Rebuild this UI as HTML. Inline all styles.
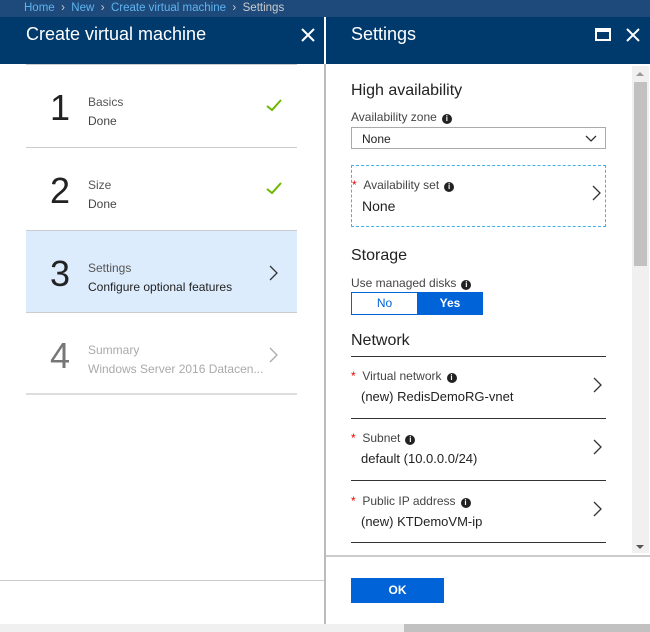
<!DOCTYPE html>
<html><head><style>
*{box-sizing:border-box;margin:0;padding:0}
body{width:650px;height:632px;position:relative;overflow:hidden;background:#fff;font-family:"Liberation Sans",sans-serif;color:#222}
.abs{position:absolute}
.crumb{left:0;top:0;width:650px;height:17px;background:#1d4a7a;font-size:11.5px;color:#5fb3f0;padding:2px 0 0 24px}
.crumb span{color:#ccc}
.hd{top:17px;height:47px;background:#003a6c;color:#fff;font-size:18px}
.item{left:26px;width:271px;height:82px;border-top:1px solid #ccc}
.num{position:absolute;left:24px;top:23px;font-size:36px;line-height:40px}
.t1{position:absolute;left:62px;top:30px;font-size:12px;color:#555}
.t2{position:absolute;left:62px;top:49px;font-size:12px}
.lbl{font-size:12px;color:#444}
.info{display:inline-block;width:10px;height:10px;border-radius:50%;background:#222;color:#fff;font-size:8px;line-height:10px;text-align:center;font-weight:bold;vertical-align:0px;margin-left:5px}
.star{color:#e00;font-size:12px}
.row{left:351px;width:255px;height:62px;border-top:1.5px solid #333}
.chev{position:absolute;right:4px;top:20px}
</style></head><body>
<div class="abs crumb">Home <span>&nbsp;›&nbsp;</span> New <span>&nbsp;›&nbsp;</span> Create virtual machine <span>&nbsp;›&nbsp;</span> <span>Settings</span></div>
<div class="abs hd" style="left:0;width:324px"><div class="abs" style="left:26px;top:7px">Create virtual machine</div>
<svg class="abs" style="left:301px;top:11px" width="14" height="14"><path d="M1 1L13 13M13 1L1 13" stroke="#fff" stroke-width="2"/></svg></div>
<div class="abs hd" style="left:326px;width:324px"><div class="abs" style="left:25px;top:7px">Settings</div>
<svg class="abs" style="left:269px;top:11px" width="16" height="13"><rect x="1" y="1" width="14" height="11" fill="none" stroke="#fff" stroke-width="2"/><rect x="1" y="1" width="14" height="3" fill="#fff"/></svg>
<svg class="abs" style="left:300px;top:11px" width="14" height="14"><path d="M1 1L13 13M13 1L1 13" stroke="#fff" stroke-width="2"/></svg></div>
<div class="abs" style="left:324px;top:64px;width:2px;height:560px;background:#bbb"></div>

<div class="abs item" style="top:64px"><div class="num">1</div><div class="t1">Basics</div><div class="t2" style="color:#444">Done</div>
<svg class="abs" style="left:240px;top:34px" width="16" height="13"><path d="M1 7L6 11L15 1" stroke="#6bb700" stroke-width="2" fill="none"/></svg></div>
<div class="abs item" style="top:147px"><div class="num">2</div><div class="t1">Size</div><div class="t2" style="color:#444">Done</div>
<svg class="abs" style="left:240px;top:34px" width="16" height="13"><path d="M1 7L6 11L15 1" stroke="#6bb700" stroke-width="2" fill="none"/></svg></div>
<div class="abs item" style="top:230px;background:#dcecfc"><div class="num">3</div><div class="t1">Settings</div><div class="t2">Configure optional features</div>
<svg class="abs" style="left:243px;top:34px" width="9" height="16"><path d="M1 1L8 8L1 15" stroke="#333" stroke-width="1.3" fill="none"/></svg></div>
<div class="abs item" style="top:312px;height:83px;border-bottom:2px solid #ddd;color:#888"><div class="num" style="color:#777">4</div><div class="t1" style="color:#aaa">Summary</div><div class="t2" style="color:#aaa">Windows Server 2016 Datacen...</div>
<svg class="abs" style="left:243px;top:34px" width="9" height="16"><path d="M1 1L8 8L1 15" stroke="#aaa" stroke-width="1.3" fill="none"/></svg></div>
<div class="abs" style="left:0;top:580px;width:324px;height:1px;background:#ccc"></div>

<div class="abs" style="left:351px;top:82px;font-size:16px">High availability</div>
<div class="abs lbl" style="left:351px;top:110px">Availability zone<span class="info">i</span></div>
<div class="abs" style="left:351px;top:127px;width:255px;height:22px;border:1px solid #aaa;font-size:12px;padding:4px 10px">None
<svg class="abs" style="right:8px;top:7px" width="12" height="8"><path d="M1 1L6 6L11 1" stroke="#333" stroke-width="1.3" fill="none"/></svg></div>
<div class="abs" style="left:351px;top:165px;width:255px;height:62px;border:1px dashed #3bb4e6">
<div class="abs lbl" style="left:0;top:12px"><span class="star">*</span> &nbsp;Availability set<span class="info">i</span></div>
<div class="abs" style="left:10px;top:32px;font-size:14px">None</div>
<svg class="abs chev" style="top:19px" width="9" height="16"><path d="M1 1L8 8L1 15" stroke="#333" stroke-width="1.3" fill="none"/></svg></div>
<div class="abs" style="left:351px;top:247px;font-size:16px">Storage</div>
<div class="abs lbl" style="left:351px;top:276px">Use managed disks<span class="info">i</span></div>
<div class="abs" style="left:351px;top:292px;width:132px;height:23px;border:1px solid #0063d8;font-size:12px">
<div class="abs" style="left:0;top:0;width:65px;height:21px;color:#0063d8;text-align:center;line-height:21px">No</div>
<div class="abs" style="left:65px;top:0;width:66px;height:21px;background:#0063d8;color:#fff;font-weight:bold;text-align:center;line-height:21px">Yes</div></div>
<div class="abs" style="left:351px;top:332px;font-size:16px">Network</div>
<div class="abs row" style="top:356px"><div class="abs lbl" style="top:12px"><span class="star">*</span> &nbsp;Virtual network<span class="info">i</span></div><div class="abs" style="left:10px;top:32px;font-size:13px">(new) RedisDemoRG-vnet</div>
<svg class="abs chev" width="9" height="16"><path d="M1 1L8 8L1 15" stroke="#333" stroke-width="1.3" fill="none"/></svg></div>
<div class="abs row" style="top:418px"><div class="abs lbl" style="top:12px"><span class="star">*</span> &nbsp;Subnet<span class="info">i</span></div><div class="abs" style="left:10px;top:32px;font-size:13px">default (10.0.0.0/24)</div>
<svg class="abs chev" width="9" height="16"><path d="M1 1L8 8L1 15" stroke="#333" stroke-width="1.3" fill="none"/></svg></div>
<div class="abs row" style="top:480px;height:63px;border-bottom:1.5px solid #333"><div class="abs lbl" style="top:13px"><span class="star">*</span> &nbsp;Public IP address<span class="info">i</span></div><div class="abs" style="left:10px;top:33px;font-size:13px">(new) KTDemoVM-ip</div>
<svg class="abs chev" width="9" height="16"><path d="M1 1L8 8L1 15" stroke="#333" stroke-width="1.3" fill="none"/></svg></div>

<div class="abs" style="left:632px;top:66px;width:17px;height:487px;background:#f0f0f0"></div>
<div class="abs" style="left:634px;top:82px;width:13px;height:184px;background:#c1c1c1"></div>
<div class="abs" style="left:636px;top:72px;width:0;height:0;border:4px solid transparent;border-bottom-color:#999;border-top:0"></div>
<div class="abs" style="left:636px;top:545px;width:0;height:0;border:4px solid transparent;border-top-color:#555;border-bottom:0"></div>
<div class="abs" style="left:326px;top:555px;width:324px;height:2px;background:#ccc"></div>
<div class="abs" style="left:351px;top:578px;width:93px;height:25px;background:#0063d8;color:#fff;font-weight:bold;font-size:12px;text-align:center;line-height:25px">OK</div>
<div class="abs" style="left:0;top:624px;width:650px;height:8px;background:#f0f0f0"></div>
<div class="abs" style="left:404px;top:624px;width:246px;height:8px;background:#c1c1c1"></div>
</body></html>
